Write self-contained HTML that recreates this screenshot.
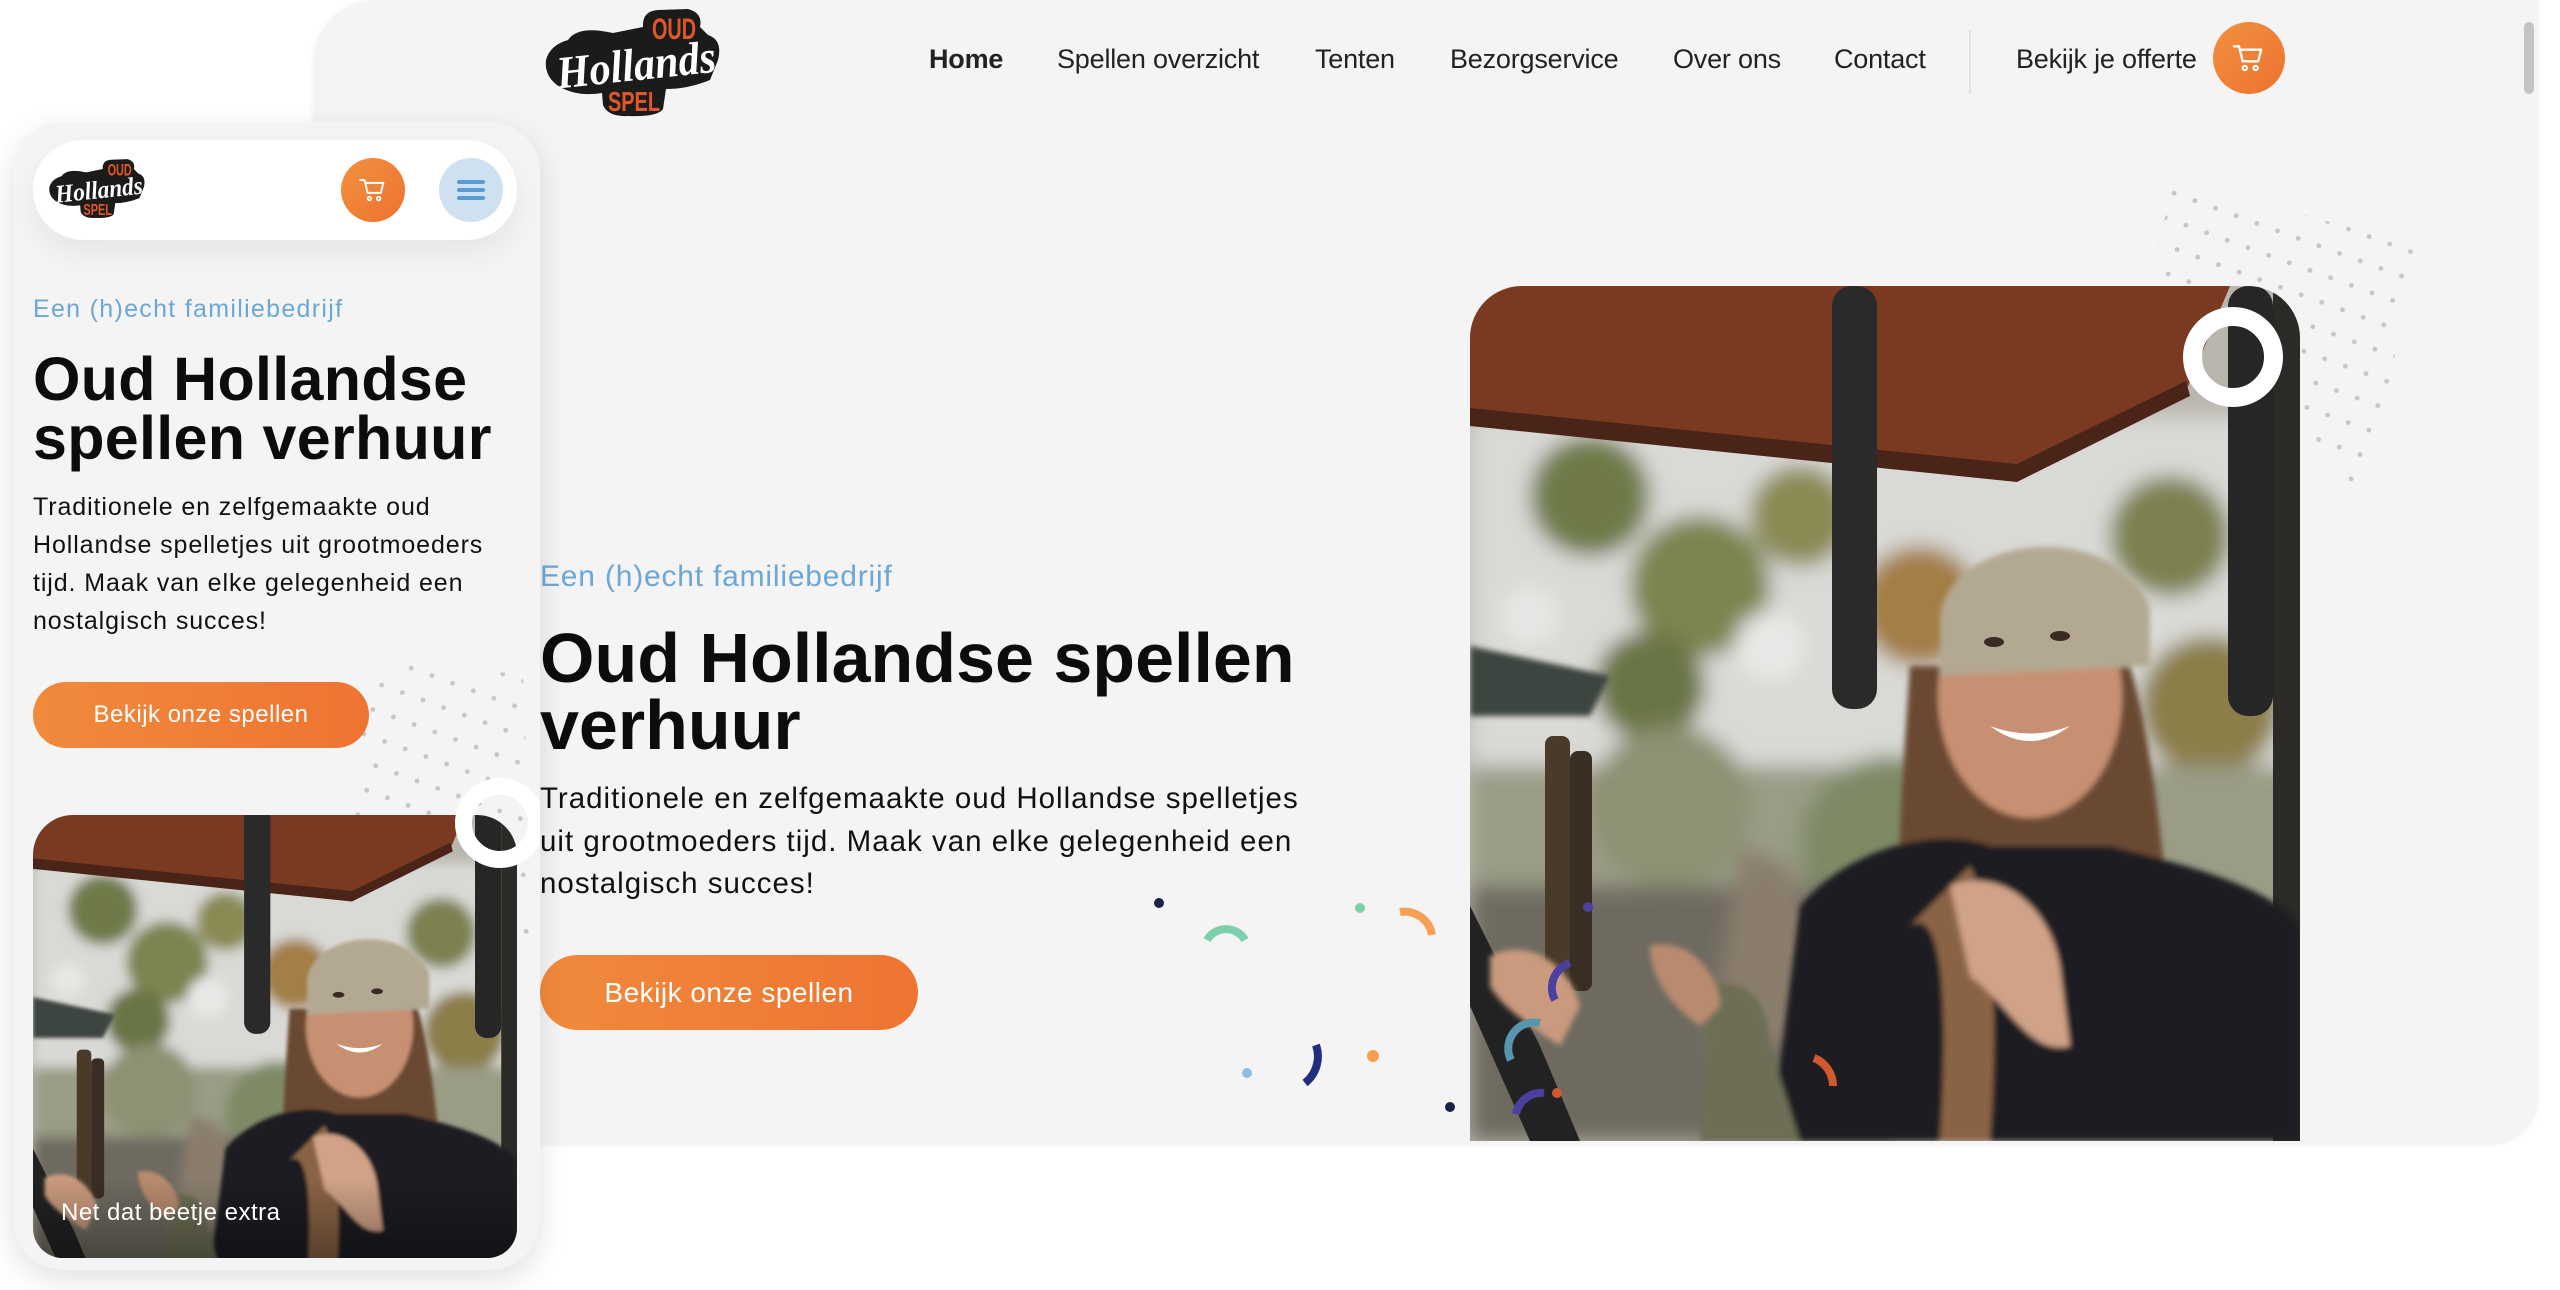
<!DOCTYPE html>
<html><head><meta charset="utf-8">
<style>
*{margin:0;padding:0;box-sizing:border-box}
html,body{width:2560px;height:1290px;overflow:hidden;background:#fff;font-family:"Liberation Sans",sans-serif;color:#111}
.abs{position:absolute}
#desk{position:absolute;left:313px;top:0;width:2225px;height:1145px;background:#f4f4f4;border-radius:64px 0 48px 0;overflow:hidden;box-shadow:0 0 6px rgba(0,0,0,.06)}
.nav{position:absolute;top:44px;font-size:27px;color:#222;white-space:nowrap;letter-spacing:-.2px}
.cart{position:absolute;border-radius:50%;background:linear-gradient(135deg,#f2913f,#ec7230)}
.btn{position:absolute;border-radius:40px;background:linear-gradient(90deg,#f08a3c,#ee7431);color:#fff;text-align:center;white-space:nowrap;letter-spacing:.5px}
#mob{position:absolute;left:13px;top:122px;width:527px;height:1148px;background:#f4f4f4;border-radius:50px;box-shadow:0 10px 30px rgba(0,0,0,.12);overflow:hidden}
</style></head><body>
<svg width="0" height="0" style="position:absolute">
<defs>
<pattern id="dp" width="22" height="26" patternUnits="userSpaceOnUse" patternTransform="rotate(20)"><circle cx="11" cy="13" r="2.4" fill="#c6c6c6"/></pattern>
<filter id="bl"><feGaussianBlur stdDeviation="10"/></filter>
<filter id="bl2"><feGaussianBlur stdDeviation="3"/></filter>
<symbol id="photo" viewBox="0 0 830 855" preserveAspectRatio="xMidYMid slice">
<rect width="830" height="855" fill="#b9b6ae"/>
<g filter="url(#bl)">
<rect x="0" y="130" width="830" height="400" fill="#d9d9d6"/>
<circle cx="120" cy="210" r="60" fill="#6f7a4a"/><circle cx="230" cy="300" r="70" fill="#7b8550"/>
<circle cx="330" cy="230" r="50" fill="#8a8a55"/><circle cx="180" cy="400" r="55" fill="#6a7545"/>
<circle cx="450" cy="320" r="60" fill="#a37e45"/><circle cx="700" cy="250" r="60" fill="#7d8150"/>
<circle cx="740" cy="420" r="70" fill="#8b7e48"/><circle cx="60" cy="330" r="30" fill="#e6e6e4"/>
<circle cx="300" cy="360" r="35" fill="#e8e8e6"/><circle cx="640" cy="330" r="40" fill="#e2e2de"/>
<rect x="0" y="480" width="830" height="200" fill="#9a9c86"/>
<circle cx="200" cy="520" r="80" fill="#8c9273"/><circle cx="420" cy="560" r="90" fill="#7e8a66"/>
<rect x="0" y="600" width="420" height="255" fill="#6e6a60"/>
<path d="M270 560 L320 580 L380 760 L240 760Z" fill="#8a7d6c"/>
</g>
<path d="M0 360 L140 390 L120 430 L0 430Z" fill="#3c4440" filter="url(#bl2)"/>
<path d="M0 0 H830 V0 L760 0 L716 105 L547 192 L0 137Z" fill="#7a3a22"/>
<path d="M0 122 L547 178 L716 95 L720 110 L547 196 L0 140Z" fill="#4a2418"/>
<rect x="362" y="0" width="45" height="423" rx="20" fill="#2a2a2a"/>
<rect x="758" y="0" width="45" height="430" rx="20" fill="#262626"/>
<rect x="803" y="0" width="27" height="855" fill="#2c2a26"/>
<rect x="75" y="450" width="25" height="250" rx="8" fill="#4a3a2a"/>
<rect x="100" y="465" width="22" height="240" rx="8" fill="#3a2e24"/>
<path d="M0 620 L70 760 L110 855 L60 855 L0 720Z" fill="#222"/>
<g filter="url(#bl2)">
<path d="M440 380 C430 520 420 700 430 855 L720 855 C700 650 690 480 660 380Z" fill="#6b4a32"/>
<path d="M330 620 C380 560 470 540 520 560 L640 560 C720 580 800 600 830 640 L830 855 L300 855Z" fill="#1f1f23"/>
<path d="M440 640 C470 620 480 700 470 855 L520 855 C530 700 520 620 500 580Z" fill="#8a6444"/>
<path d="M240 700 C280 690 300 720 300 760 L330 855 L230 855Z" fill="#6d6e55"/>
<ellipse cx="560" cy="410" rx="92" ry="122" fill="#c89072"/>
<path d="M470 330 C480 250 640 230 680 320 L680 380 L470 390Z" fill="#b3a993"/>
<path d="M480 600 C530 580 580 620 590 680 L600 760 C560 770 540 720 500 690Z" fill="#d0a287"/>
<path d="M20 670 C60 650 100 680 110 720 L90 760 C60 740 30 720 20 700Z" fill="#c99a7d"/>
<path d="M180 660 C220 650 250 690 250 720 L230 740 C200 720 180 690 180 660Z" fill="#b98b6e"/>
</g>
<path d="M520 440 Q560 470 600 440 Q560 455 520 440Z" fill="#fff"/>
<ellipse cx="524" cy="356" rx="10" ry="5" fill="#3a2a22"/><ellipse cx="590" cy="350" rx="10" ry="5" fill="#3a2a22"/>
</symbol>
<symbol id="logo" viewBox="0 0 204 113">
<path d="M30 35 Q40 20 75 28 L105 22 Q104 6 120 5 L150 4 Q165 8 162 22 L170 30 Q185 35 180 55 L172 75 Q150 84 128 84 L125 104 Q120 112 90 111 Q70 112 65 100 L64 88 Q40 92 22 82 Q6 72 8 55 Q12 40 30 35Z" fill="#1d1b1a"/>
<text x="114" y="34" font-family="Liberation Sans Narrow,Liberation Sans,sans-serif" font-size="30" font-weight="bold" fill="#e0572a" textLength="44" lengthAdjust="spacingAndGlyphs">OUD</text>
<text x="18" y="76" font-family="Liberation Serif,serif" font-style="italic" font-weight="bold" font-size="46" fill="#fff" textLength="160" lengthAdjust="spacingAndGlyphs" transform="rotate(-6 90 60)">Hollands</text>
<text x="70" y="106" font-family="Liberation Sans Narrow,Liberation Sans,sans-serif" font-size="28" font-weight="bold" fill="#e0572a" textLength="52" lengthAdjust="spacingAndGlyphs">SPEL</text>
</symbol>
<symbol id="cartic" viewBox="0 0 24 24"><path d="M3 5h3l2.2 9h9.3l1.8-7H7" fill="none" stroke="#fff" stroke-width="1.4" stroke-linecap="round" stroke-linejoin="round"/><circle cx="9.5" cy="18" r="1.3" fill="none" stroke="#fff" stroke-width="1.2"/><circle cx="16" cy="18" r="1.3" fill="none" stroke="#fff" stroke-width="1.2"/></symbol>
</defs></svg>

<div id="desk">
  <svg class="abs" style="left:225px;top:5px" width="204" height="113"><use href="#logo"/></svg>
  <div class="nav" style="left:616px;font-weight:bold">Home</div>
  <div class="nav" style="left:744px">Spellen overzicht</div>
  <div class="nav" style="left:1002px">Tenten</div>
  <div class="nav" style="left:1137px">Bezorgservice</div>
  <div class="nav" style="left:1360px">Over ons</div>
  <div class="nav" style="left:1521px">Contact</div>
  <div class="abs" style="left:1656px;top:30px;width:2px;height:64px;background:#e2e2e2"></div>
  <div class="nav" style="left:1703px">Bekijk je offerte</div>
  <div class="cart" style="left:1900px;top:22px;width:72px;height:72px"><svg style="margin:16px" width="40" height="40"><use href="#cartic"/></svg></div>
  <div class="abs" style="right:4px;top:22px;width:10px;height:72px;border-radius:5px;background:#c4c4c4"></div>

  <svg class="abs" style="left:0;top:0" width="2225" height="600"><polygon points="1862,180 2106,246 2050,500 1840,262" fill="url(#dp)"/></svg>

  <div class="abs" style="left:227px;top:560px;font-size:30px;color:#6ba7d7;letter-spacing:.8px">Een (h)echt familiebedrijf</div>
  <div class="abs" style="left:227px;top:625px;font-size:70px;font-weight:bold;line-height:67px;letter-spacing:0;color:#0c0c0c">Oud Hollandse spellen<br>verhuur</div>
  <div class="abs" style="left:227px;top:778px;font-size:29.5px;line-height:42.5px;color:#111;width:900px;letter-spacing:1px;white-space:nowrap">Traditionele en zelfgemaakte oud Hollandse spelletjes<br>uit grootmoeders tijd. Maak van elke gelegenheid een<br>nostalgisch succes!</div>
  <div class="btn" style="left:227px;top:955px;width:378px;height:75px;line-height:75px;font-size:28px">Bekijk onze spellen</div>

  <div class="abs" style="left:1157px;top:286px;width:830px;height:855px;border-radius:52px 52px 0 0;overflow:hidden">
    <svg width="830" height="855"><use href="#photo"/></svg>
  </div>
  <div class="abs" style="left:1870px;top:307px;width:100px;height:100px;border-radius:50%;border:19px solid #fff"></div>

  <svg class="abs" style="left:0;top:0" width="2225" height="1145">
    <circle cx="846" cy="903" r="5" fill="#1a2146"/>
    <path d="M894 940 A22 22 0 0 1 932 940" stroke="#7ed0ac" stroke-width="8" fill="none"/>
    <circle cx="1047" cy="908" r="5" fill="#7ed0ac"/>
    <path d="M1087 912 A28 28 0 0 1 1119 935" stroke="#f5a055" stroke-width="8" fill="none"/>
    <path d="M1003 1045 A34 34 0 0 1 992 1083" stroke="#1f2f7d" stroke-width="8" fill="none"/>
    <circle cx="934" cy="1073" r="5" fill="#8dbde0"/>
    <circle cx="1060" cy="1056" r="6" fill="#f5a055"/>
    <circle cx="1137" cy="1107" r="5" fill="#1a2146"/>
    <circle cx="1275" cy="907" r="5" fill="#4b3fa0"/>
    <path d="M1257 963 A26 26 0 0 0 1242 1000" stroke="#4b3fa0" stroke-width="8" fill="none"/>
    <path d="M1227 1023 A26 26 0 0 0 1198 1060" stroke="#5896b0" stroke-width="8" fill="none"/>
    <circle cx="1244" cy="1093" r="5" fill="#d05a30"/>
    <path d="M1231 1093 A26 26 0 0 0 1203 1114" stroke="#4b3fa0" stroke-width="8" fill="none"/>
    <path d="M1501 1058 A30 30 0 0 1 1520 1086" stroke="#d05a30" stroke-width="8" fill="none"/>
  </svg>
</div>

<div id="mob">
  <div class="abs" style="left:20px;top:18px;width:484px;height:100px;background:#fff;border-radius:50px;box-shadow:0 14px 30px rgba(0,0,0,.06)"></div>
  <svg class="abs" style="left:32px;top:34px" width="112" height="64"><use href="#logo"/></svg>
  <div class="cart" style="left:328px;top:36px;width:64px;height:64px"><svg style="margin:15px" width="34" height="34"><use href="#cartic"/></svg></div>
  <div class="abs" style="left:426px;top:36px;width:64px;height:64px;border-radius:50%;background:#cfe1f0">
    <div class="abs" style="left:18px;top:22px;width:28px;height:4px;border-radius:2px;background:#5b9bd5"></div>
    <div class="abs" style="left:18px;top:30px;width:28px;height:4px;border-radius:2px;background:#5b9bd5"></div>
    <div class="abs" style="left:18px;top:38px;width:28px;height:4px;border-radius:2px;background:#5b9bd5"></div>
  </div>
  <div class="abs" style="left:20px;top:173px;font-size:25px;color:#6ba7d7;letter-spacing:1.3px">Een (h)echt familiebedrijf</div>
  <div class="abs" style="left:20px;top:228px;font-size:61px;font-weight:bold;line-height:59px;letter-spacing:.3px;color:#0c0c0c;white-space:nowrap">Oud Hollandse<br>spellen verhuur</div>
  <div class="abs" style="left:20px;top:366px;font-size:25px;line-height:38px;color:#111;letter-spacing:.9px;white-space:nowrap">Traditionele en zelfgemaakte oud<br>Hollandse spelletjes uit grootmoeders<br>tijd. Maak van elke gelegenheid een<br>nostalgisch succes!</div>
  <svg class="abs" style="left:0;top:0" width="527" height="1000"><polygon points="360,540 510,552 520,830 325,780" fill="url(#dp)"/></svg>
  <div class="btn" style="left:20px;top:560px;width:336px;height:66px;line-height:66px;font-size:24px">Bekijk onze spellen</div>
  <div class="abs" style="left:20px;top:693px;width:484px;height:443px;border-radius:40px 40px 30px 30px;overflow:hidden">
    <svg width="484" height="443"><use href="#photo" width="484" height="443"/></svg>
    <div class="abs" style="left:0;bottom:0;width:484px;height:80px;background:linear-gradient(transparent,rgba(0,0,0,.35))"></div>
    <div class="abs" style="left:28px;top:384px;font-size:24px;color:#fff;letter-spacing:.5px">Net dat beetje extra</div>
  </div>
  <div class="abs" style="left:442px;top:656px;width:90px;height:90px;border-radius:50%;border:17px solid #fff"></div>
</div>
</body></html>
